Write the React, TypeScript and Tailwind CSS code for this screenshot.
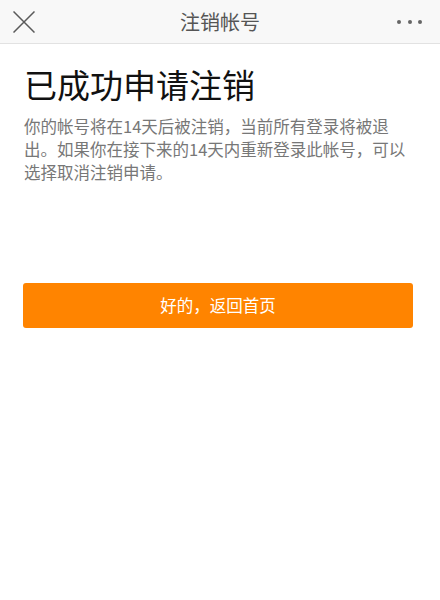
import React from "react";

export default function App() {
  return (
    <div className="w-[440px] h-[600px] bg-white" style={{ fontFamily: '"Noto Sans CJK SC", "Noto Sans", sans-serif' }}>
      <div className="h-[44px] bg-[#f8f8f8] border-b border-[#e2e2e2] flex items-center justify-between pl-[13px] pr-[18px] relative">
        <svg width="22" height="22" viewBox="0 0 22 22" className="text-[#5a5a5a]">
          <path d="M0.5 0.5 L21.5 21.5 M21.5 0.5 L0.5 21.5" stroke="currentColor" strokeWidth="1.5" fill="none" />
        </svg>
        <div className="absolute left-0 right-0 text-center text-[20px] text-[#555] pointer-events-none leading-[44px]">注销帐号</div>
        <div className="flex gap-[6.5px]">
          <span className="w-[4px] h-[4px] rounded-full bg-[#666]" />
          <span className="w-[4px] h-[4px] rounded-full bg-[#666]" />
          <span className="w-[4px] h-[4px] rounded-full bg-[#666]" />
        </div>
      </div>
      <div className="pl-[23px] pr-[27px] pt-[17px]">
        <h1 className="text-[33px] leading-[46px] text-[#111] font-normal pl-[1px]">已成功申请注销</h1>
        <p className="mt-[8px] text-[16.5px] leading-[23px] text-[#777] pl-[1px]">
          <span className="block whitespace-nowrap">你的帐号将在14天后被注销，当前所有登录将被退</span>
          <span className="block whitespace-nowrap">出。如果你在接下来的14天内重新登录此帐号，可以</span>
          <span className="block whitespace-nowrap">选择取消注销申请。</span>
        </p>
        <button className="mt-[99px] w-full h-[45px] rounded-[3px] bg-[#ff8400] text-white text-[16.5px]">好的，返回首页</button>
      </div>
    </div>
  );
}
